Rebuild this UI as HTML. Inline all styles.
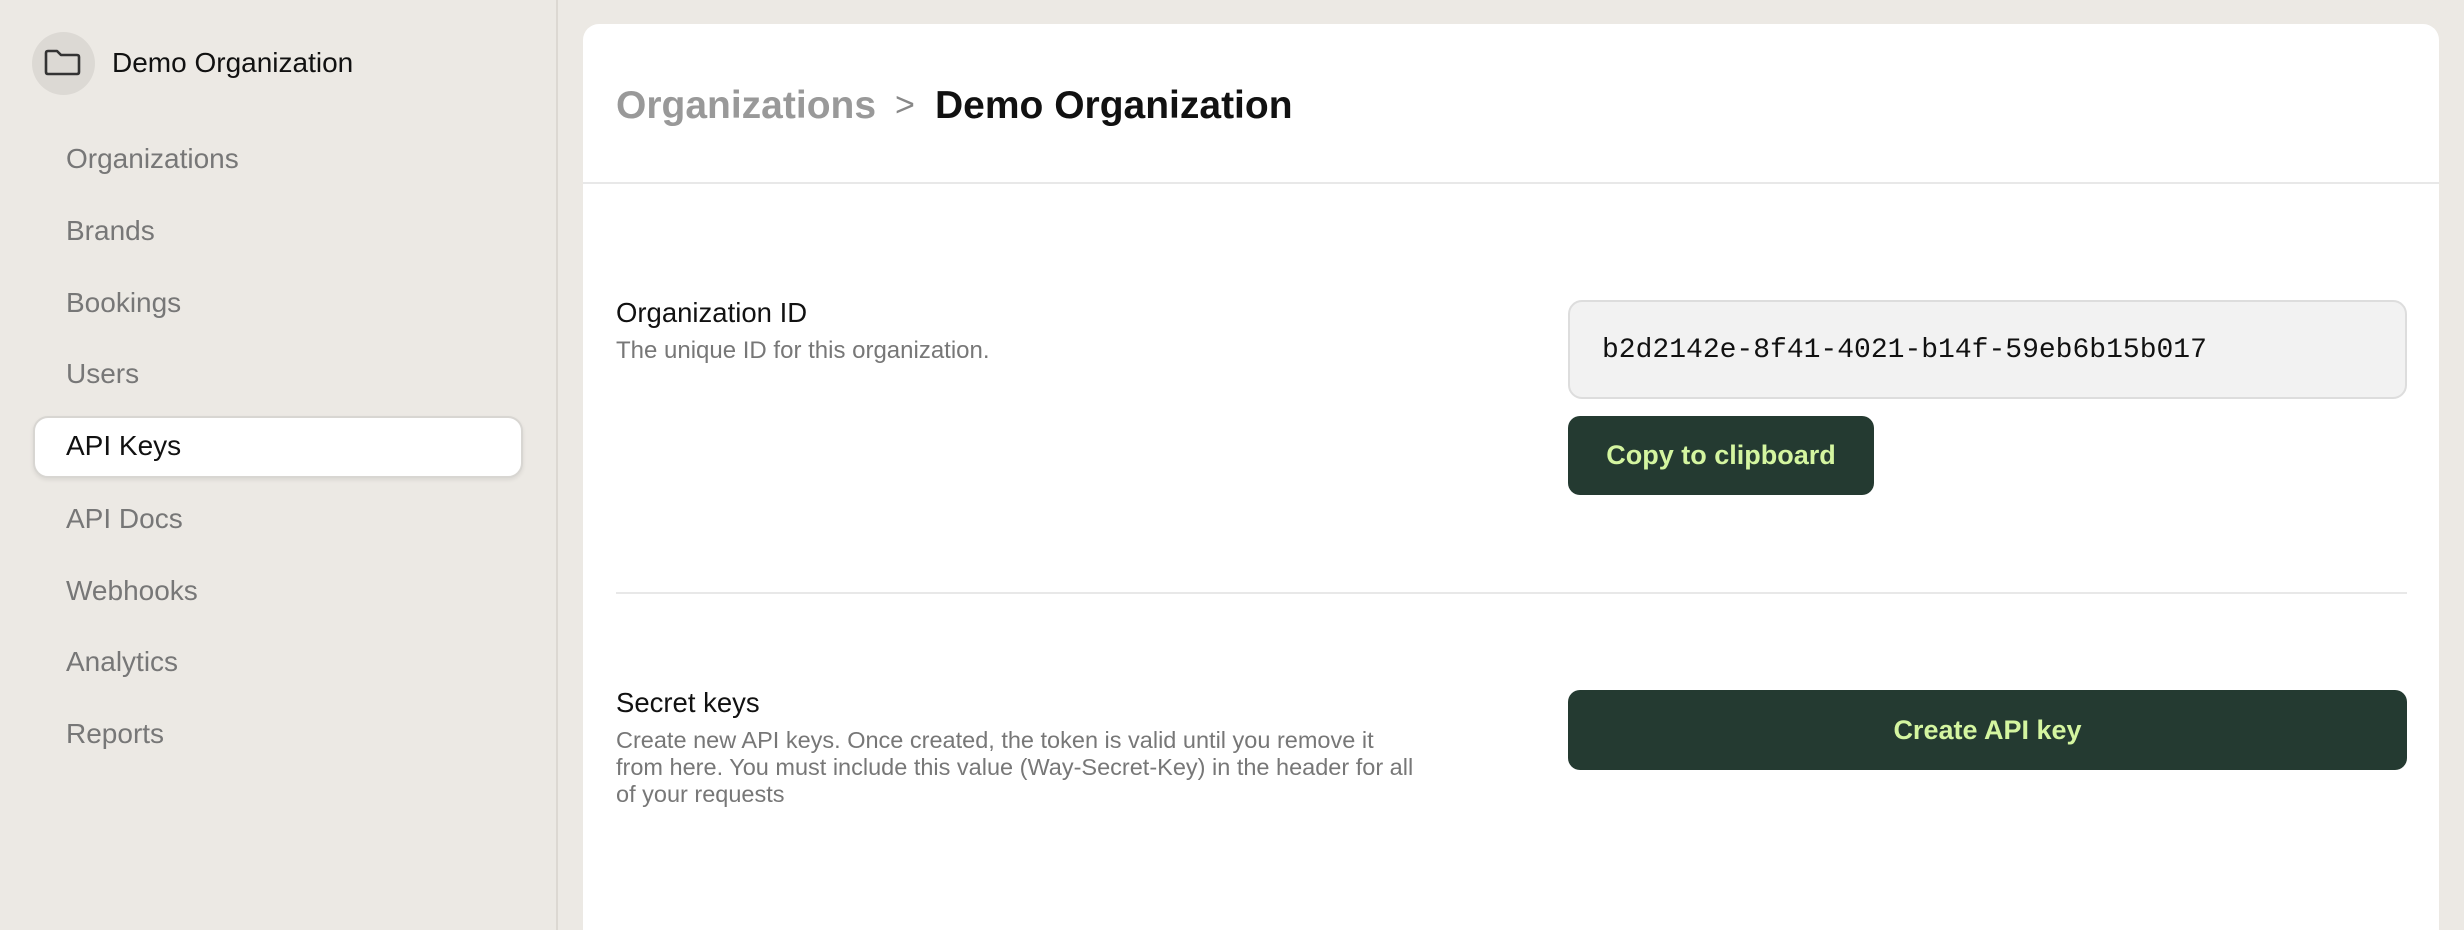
<!DOCTYPE html>
<html><head><meta charset="utf-8"><style>
*{margin:0;padding:0;box-sizing:border-box}
html,body{width:2464px;height:930px;overflow:hidden;background:#ece9e4;font-family:"Liberation Sans",sans-serif;position:relative}
.side{position:absolute;left:0;top:0;width:558px;height:930px;border-right:2px solid #dcd8d2}
.av{position:absolute;left:32px;top:32px;width:63px;height:63px;border-radius:50%;background:#dcd9d4}
.org{position:absolute;left:112px;top:47px;font-size:28px;color:#111}
.nav{position:absolute;left:66px;font-size:28px;color:#777}
.active{position:absolute;left:33px;top:416px;width:490px;height:62px;background:#fff;border:2px solid #d8d6d2;border-radius:15px;box-shadow:0 2px 4px rgba(0,0,0,.08)}
.card{position:absolute;left:583px;top:24px;width:1856px;height:906px;background:#fff;border-radius:16px 16px 0 0;overflow:hidden}
.t{position:absolute;white-space:nowrap}
.btn{position:absolute;background:#243a31;color:#d4f5a0;font-weight:bold;font-size:27px;border-radius:12px;display:flex;align-items:center;justify-content:center}
</style></head><body>
<div class="side">
<div class="av"><svg width="63" height="63" viewBox="0 0 63 63"><path d="M14 21 q0-2 2-2 h9 l4 4 h16 q2 0 2 2 v15 q0 2-2 2 h-29 q-2 0-2-2 z" fill="none" stroke="#333" stroke-width="2.6" stroke-linejoin="round"/></svg></div>
<div class="org">Demo Organization</div>
<div class="active"></div>
<div class="nav" style="top:143px">Organizations</div>
<div class="nav" style="top:215px">Brands</div>
<div class="nav" style="top:287px">Bookings</div>
<div class="nav" style="top:358px">Users</div>
<div class="nav" style="top:430px;color:#111">API Keys</div>
<div class="nav" style="top:503px">API Docs</div>
<div class="nav" style="top:575px">Webhooks</div>
<div class="nav" style="top:646px">Analytics</div>
<div class="nav" style="top:718px">Reports</div>
</div>
<div class="card">
<div class="t" style="left:33px;top:60px;font-size:39px;color:#999;font-weight:bold">Organizations</div>
<div class="t" style="left:312px;top:62px;font-size:34px;color:#888">&gt;</div>
<div class="t" style="left:352px;top:60px;font-size:39px;color:#111;font-weight:bold">Demo Organization</div>
<div style="position:absolute;left:0;top:158px;width:1856px;height:2px;background:#e8e8e8"></div>
<div class="t" style="left:33px;top:273px;font-size:27.5px;color:#111">Organization ID</div>
<div class="t" style="left:33px;top:313px;font-size:24px;color:#777">The unique ID for this organization.</div>
<div style="position:absolute;left:985px;top:276px;width:839px;height:99px;background:#f2f2f2;border:2px solid #ddd;border-radius:14px"></div>
<div class="t" style="left:1019px;top:311px;font-family:'Liberation Mono',monospace;font-size:28px;color:#111">b2d2142e-8f41-4021-b14f-59eb6b15b017</div>
<div class="btn" style="left:985px;top:392px;width:306px;height:79px">Copy to clipboard</div>
<div style="position:absolute;left:33px;top:568px;width:1791px;height:2px;background:#e8e8e8"></div>
<div class="t" style="left:33px;top:663px;font-size:27.5px;color:#111">Secret keys</div>
<div style="position:absolute;left:33px;top:703px;width:805px;font-size:23.5px;line-height:27px;color:#777">Create new API keys. Once created, the token is valid until you remove it from here. You must include this value (Way-Secret-Key) in the header for all of your requests</div>
<div class="btn" style="left:985px;top:666px;width:839px;height:80px">Create API key</div>
</div>
</body></html>
